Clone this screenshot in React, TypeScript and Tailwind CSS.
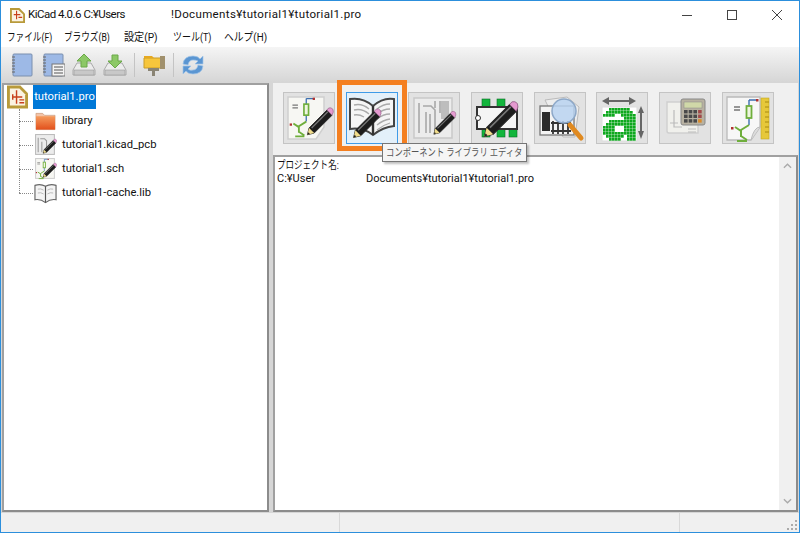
import type { ReactNode } from "react";

const font = { fontFamily: 'Roboto, "Noto Sans CJK JP", sans-serif' };

function Pencil({ x = 0, y = 0, s = 1 }: { x?: number; y?: number; s?: number }) {
  // tip at bottom left, 36 box
  return (
    <g transform={`translate(${x} ${y}) scale(${s})`}>
      <path d="M6 27 L27 6 L33 12 L12 33 L4 35 Z" fill="#1d1d1d" stroke="#222" strokeWidth="1" />
      <path d="M9 27 L28 8" stroke="#777" strokeWidth="1.5" />
      <path d="M27 6 L29 3.5 Q32 2.5 34 5 Q35.5 8 33 12 Z" fill="#e59ad0" stroke="#8a5a80" strokeWidth=".7" />
      <path d="M6 27 L12 33 L4 35 Z" fill="#f0dc8c" />
      <path d="M4 35 L5 32 L7 34 Z" fill="#222" />
    </g>
  );
}

function SchLines() {
  return (
    <g fill="none" strokeWidth="1.4">
      <path d="M22 5 H30 M22 5 V12 M22 23 V30" stroke="#3c6fb0" />
      <rect x="19.5" y="11" width="5" height="12" stroke="#6fae3c" fill="#eef5e0" strokeWidth="1.8" />
      <path d="M22 30 L14 35 V42 M14 36 L8 32 M14 41 L20 45 M10 46 H20" stroke="#6fae3c" strokeWidth="2" />
      <path d="M7 12 H13 M7 15 H13" stroke="#777" />
      <rect x="29" y="4" width="2.5" height="2.5" fill="#b03030" stroke="none" />
      <rect x="4" y="32" width="2.5" height="2.5" fill="#b03030" stroke="none" />
    </g>
  );
}

function SchIcon() {
  return (
    <svg viewBox="0 0 50 50" className="w-[50px] h-[50px]">
      <path d="M4 4 H40 V34 L32 46 H4 Z" fill="#f7f7f3" stroke="#cfcfcf" strokeWidth="1.5" />
      <g transform="translate(2 1) scale(.92)"><SchLines /></g>
      <Pencil x={20} y={12} s={0.85} />
    </svg>
  );
}

function BookIcon() {
  return (
    <svg viewBox="0 0 50 50" className="w-[50px] h-[50px]">
      <path d="M26 13 Q16 4 3 6 V36 Q16 34 26 42 Q36 34 47 33 V6 Q36 4 26 13 Z" fill="#f5f5f5" stroke="#444" strokeWidth="2" />
      <path d="M26 13 V42" stroke="#333" strokeWidth="2.4" />
      <path d="M7 12 Q15 10 22 16 M7 17 Q15 15 22 21 M7 22 Q12 21 17 24 M30 16 Q36 11 43 11 M30 21 Q36 16 43 16 M30 26 Q36 21 43 21 M30 32 Q36 27 43 26 M30 37 Q36 32 43 30" stroke="#aaa" strokeWidth="1.3" fill="none" />
      <Pencil x={3} y={13} s={0.9} />
    </svg>
  );
}

function PcbIcon() {
  return (
    <svg viewBox="0 0 50 50" className="w-[50px] h-[50px]">
      <rect x="5" y="5" width="38" height="40" fill="#ececec" stroke="#c9c9c9" strokeWidth="1.5" />
      <g fill="none" stroke="#a8a8a8" strokeWidth="1.6">
        <path d="M10 10 V40 M14 13 H22 L26 17 V40 M17 19 V40 M21 21 V40 M26 8 V15 M31 8 V20" />
      </g>
      <rect x="32" y="8" width="8" height="18" fill="#bdbdbd" />
      <Pencil x={22} y={16} s={0.72} />
    </svg>
  );
}

function ChipIcon() {
  return (
    <svg viewBox="0 0 50 50" className="w-[50px] h-[50px]">
      <rect x="10" y="6" width="8" height="9" fill="#12b53c" stroke="#0a6d25" strokeWidth=".6" />
      <rect x="25" y="6" width="8" height="9" fill="#12b53c" stroke="#0a6d25" strokeWidth=".6" />
      <rect x="10" y="35" width="8" height="9" fill="#12b53c" stroke="#0a6d25" strokeWidth=".6" />
      <rect x="25" y="35" width="8" height="9" fill="#12b53c" stroke="#0a6d25" strokeWidth=".6" />
      <rect x="37" y="35" width="8" height="9" fill="#12b53c" stroke="#0a6d25" strokeWidth=".6" />
      <rect x="5" y="14" width="40" height="22" fill="#f5f5f5" stroke="#333" strokeWidth="2" />
      <circle cx="6" cy="25" r="2.5" fill="#fff" stroke="#333" />
      <Pencil x={8} y={5} s={1.1} />
    </svg>
  );
}

function InspectIcon() {
  return (
    <svg viewBox="0 0 50 50" className="w-[50px] h-[50px]">
      <path d="M10 7 L32 4 L44 14 L40 44 H28 Z" fill="#ededed" stroke="#bbb" />
      <rect x="5" y="13" width="34" height="29" fill="#f3f3f3" stroke="#777" strokeWidth="1.3" />
      <rect x="7" y="19" width="8" height="19" fill="#2b2b2b" />
      <path d="M18 28 V41 M23 28 V41 M28 28 V41 M33 28 V41 M16 30 H36 M16 38 H36" stroke="#333" strokeWidth="1.8" />
      <path d="M35 32 L46 45" stroke="#e08a20" strokeWidth="5" strokeLinecap="round" />
      <circle cx="29" cy="18" r="12" fill="#b9d2f0" fillOpacity=".85" stroke="#8da8c8" strokeWidth="1.5" />
    </svg>
  );
}

function FontIcon() {
  const cells = [
    "00111111100", "01111111110", "11110011111", "00000001111", "00111111111", "01111111111",
    "11110001111", "11110001111", "11111111111", "01111110111", "00111100111",
  ];
  return (
    <svg viewBox="0 0 50 50" className="w-[50px] h-[50px]">
      <path d="M5 8 L12 4 V7 H32 V4 L39 8 L32 12 V9 H12 V12 Z" fill="#666" />
      <path d="M44 13 L47 20 H45 V38 H47 L44 46 L41 38 H43 V20 H41 Z" fill="#666" />
      <rect x="5" y="14" width="35" height="34" fill="#fff" stroke="#ddd" />
      {cells.map((row, r) =>
        row.split("").map((c, i) =>
          c === "1" ? <rect key={`${r}-${i}`} x={6 + i * 3} y={15 + r * 3} width="2.7" height="2.7" fill="#0ea81e" /> : null
        )
      )}
    </svg>
  );
}

function CalcIcon() {
  return (
    <svg viewBox="0 0 50 50" className="w-[50px] h-[50px]">
      <path d="M7 9 H38 V40 H9 Q7 40 7 38 Z" fill="#f0f0ec" stroke="#cfcfcf" strokeWidth="1.4" />
      <path d="M14 17 V34 H22 M10 30 H18 M28 36 H36 M28 39 H36" stroke="#bbb" strokeWidth="1.2" fill="none" />
      <rect x="21" y="6" width="24" height="26" rx="2" fill="#b8b2a2" stroke="#888" />
      <rect x="24" y="9" width="18" height="6" fill="#d0d8a8" stroke="#888" strokeWidth=".5" />
      {[0, 1, 2].map((r) =>
        [0, 1, 2, 3].map((c) => (
          <rect key={`${r}${c}`} x={24 + c * 4.7} y={17 + r * 4.6} width="3.6" height="3.4" fill={c === 3 ? (r === 2 ? "#d98a2a" : "#a04a4a") : "#4a4a4a"} />
        ))
      )}
    </svg>
  );
}

function ReportIcon() {
  return (
    <svg viewBox="0 0 50 50" className="w-[50px] h-[50px]">
      <path d="M4 4 H37 V34 L28 47 H4 Z" fill="#f7f7f7" stroke="#bbb" strokeWidth="1.3" />
      <path d="M37 34 Q31 34 28 47" fill="#ddd" stroke="#bbb" />
      <rect x="38" y="5" width="8" height="41" fill="#e6c83a" stroke="#c4a820" strokeWidth=".6" />
      <path d="M42 9 H46 M42 14 H46 M42 19 H46 M42 24 H46 M42 29 H46 M42 34 H46 M42 39 H46" stroke="#a88a10" />
      <g transform="translate(4 2)"><SchLines /></g>
    </svg>
  );
}

function BigButton({ active, children }: { active?: boolean; children: ReactNode }) {
  return (
    <div
      className={
        active
          ? "w-[52px] h-[52px] flex items-center justify-center border border-[#3f9be8] bg-[#e3f0fa]"
          : "w-[52px] h-[52px] flex items-center justify-center border border-[#c4c4c4] bg-[#e2e2e2]"
      }
    >
      {children}
    </div>
  );
}

function NotebookIcon({ doc }: { doc?: boolean }) {
  return (
    <svg viewBox="0 0 24 24" className="w-[24px] h-[24px]">
      <rect x="3" y="1" width="19" height="22" rx="1" fill="#9db9e6" stroke="#7a8fae" />
      <path d="M2 4 H5 M2 7 H5 M2 10 H5 M2 13 H5 M2 16 H5 M2 19 H5" stroke="#666" strokeWidth="1" />
      {doc && (
        <>
          <rect x="11" y="11" width="13" height="12" fill="#f4f4f4" stroke="#777" />
          <path d="M13 14 H22 M13 17 H22 M13 20 H22" stroke="#555" strokeWidth="1.2" />
        </>
      )}
    </svg>
  );
}

function DriveIcon({ down }: { down?: boolean }) {
  return (
    <svg viewBox="0 0 24 24" className="w-[24px] h-[24px]">
      <path d="M5 10 H19 L23 17 V22 H1 V17 Z" fill="#ececec" stroke="#aaa" />
      <rect x="2" y="17" width="20" height="5" fill="#c8c8c8" stroke="#999" strokeWidth=".6" />
      <path
        d={down ? "M9 2 H15 V8 H19 L12 15 L5 8 H9 Z" : "M12 1 L19 8 H15 V14 H9 V8 H5 Z"}
        fill="#8cc866"
        stroke="#6aa848"
      />
    </svg>
  );
}

function SwitchIcon() {
  return (
    <svg viewBox="0 0 24 24" className="w-[24px] h-[24px]">
      <path d="M2 5 H19 V15 H2 Z" fill="#f7c63c" stroke="#c99c28" />
      <path d="M2 5 V3 H10 L12 5 Z" fill="#e6a820" />
      <rect x="18" y="3" width="5" height="13" fill="#a0906c" />
      <path d="M6 15 H17 V18 H13 V23 H10 V18 H6 Z" fill="#8a8474" />
    </svg>
  );
}

function RefreshIcon() {
  return (
    <svg viewBox="0 0 24 24" className="w-[24px] h-[24px]" fill="none">
      <path d="M2 11 Q3 3 12 3 Q17 3 19 6 L22 3 V11 H14 L17 8 Q15 7 12 7 Q8 7 7 12 Z" fill="#5b96d2" stroke="#a0c4e8" strokeWidth=".7" />
      <path d="M22 13 Q21 21 12 21 Q7 21 5 18 L2 21 V13 H10 L7 16 Q9 18 12 17 Q16 17 17 12 Z" fill="#5b96d2" stroke="#a0c4e8" strokeWidth=".7" />
    </svg>
  );
}

function ProjectIcon() {
  return (
    <svg viewBox="0 0 22 24" className="w-[21px] h-[24px] shrink-0">
      <path d="M0 0 H14 L22 8 V24 H0 Z" fill="#b89a3a" />
      <path d="M3 3 H13 L19 9 V21 H3 Z" fill="#fbf3e2" />
      <path d="M10 5 V19 M6 12 H16 M6 9 V15 M13 15 H18 M13 18 H18" stroke="#c8401c" strokeWidth="1.5" fill="none" />
    </svg>
  );
}

function TreeRow({ icon, label }: { icon: ReactNode; label: string }) {
  return (
    <div className="h-[24px] flex items-center">
      <div className="w-[14px] ml-[12px] mr-[1px] border-t border-dotted border-[#888]" />
      <div className="w-[23px] h-[24px] flex items-center justify-center">{icon}</div>
      <span className="ml-[5px] text-[11.2px] text-[#111]">{label}</span>
    </div>
  );
}

function Sep() {
  return <div className="w-px h-[24px] bg-[#c4c4c4]" />;
}

export default function App() {
  return (
    <div
      className="w-[800px] h-[533px] overflow-hidden flex flex-col bg-[#f0f0f0] border border-[#2c8fdc] relative text-[#111]"
      style={font}
    >
      {/* title bar */}
      <div className="h-[28px] bg-white flex items-center shrink-0">
        <div className="ml-[9px] mr-[3px]">
          <svg viewBox="0 0 16 16" className="w-[15px] h-[15px]">
            <path d="M0 0 H10 L16 6 V16 H0 Z" fill="#b89a3a" />
            <path d="M2 2 H9 L14 7 V14 H2 Z" fill="#fbf3e2" />
            <path d="M7 3 V12 M4 7 H11 M9 10 H13" stroke="#c8401c" strokeWidth="1.2" />
          </svg>
        </div>
        <span className="text-[11.5px] tracking-[-0.5px] w-[143px] whitespace-nowrap">KiCad 4.0.6 C:¥Users</span>
        <span className="text-[11.5px] tracking-[0.35px] whitespace-nowrap">!Documents¥tutorial1¥tutorial1.pro</span>
        <div className="ml-auto flex items-center">
          <div className="w-[45px] flex justify-center">
            <div className="w-[10px] h-px bg-[#444]" />
          </div>
          <div className="w-[45px] flex justify-center">
            <div className="w-[10px] h-[10px] border border-[#444]" />
          </div>
          <div className="w-[45px] flex justify-center">
            <svg viewBox="0 0 10 10" className="w-[10px] h-[10px]">
              <path d="M0 0 L10 10 M10 0 L0 10" stroke="#444" strokeWidth="1" />
            </svg>
          </div>
        </div>
      </div>
      {/* menu: katakana is condensed in the reference's UI font */}
      <div className="h-[18px] bg-white flex items-center shrink-0 text-[11.5px] pl-[6px] whitespace-nowrap">
        <div className="w-[57px]"><span className="inline-block origin-left scale-x-[0.75]">ファイル(F)</span></div>
        <div className="w-[60px]"><span className="inline-block origin-left scale-x-[0.75]">ブラウズ(B)</span></div>
        <div className="w-[49px]"><span className="inline-block origin-left scale-x-[0.88]">設定(P)</span></div>
        <div className="w-[51px]"><span className="inline-block origin-left scale-x-[0.78]">ツール(T)</span></div>
        <div><span className="inline-block origin-left scale-x-[0.85]">ヘルプ(H)</span></div>
      </div>
      {/* toolbar */}
      <div className="h-[35px] shrink-0 flex items-center pl-[9px] bg-gradient-to-b from-[#f5f5f5] to-[#d6d6d6] gap-[7px]">
        <NotebookIcon />
        <NotebookIcon doc />
        <DriveIcon />
        <DriveIcon down />
        <Sep />
        <SwitchIcon />
        <Sep />
        <RefreshIcon />
      </div>
      {/* body */}
      <div className="flex-1 flex min-h-0 bg-[#d6d6d6] pt-[1px] pl-[1px] pr-[1px] gap-[4px]">
        <div className="w-[267px] bg-white border-2 border-t-[#a0a0a0] border-l-[#a0a0a0] border-r-[#8c8c8c] border-b-[#8c8c8c] pl-[3px] relative">
          <div className="flex items-center h-[24px]">
            <ProjectIcon />
            <span className="ml-[5px] h-[24px] w-[63px] flex items-center justify-center bg-[#0078d7] text-white text-[11.2px]">tutorial1.pro</span>
          </div>
          <div className="absolute left-[15px] top-[24px] h-[84px] border-l border-dotted border-[#888]" />
          <TreeRow
            label="library"
            icon={
              <svg viewBox="0 0 22 20" className="w-[21px] h-[20px]">
                <path d="M1 2 H8 L10 4 H21 V19 H1 Z" fill="#f4c4a8" stroke="#c09070" strokeWidth=".6" />
                <defs>
                  <linearGradient id="folderFill" x1="0" y1="0" x2="0" y2="1">
                    <stop offset="0" stopColor="#f59a5c" />
                    <stop offset="1" stopColor="#e2501c" />
                  </linearGradient>
                </defs>
                <rect x="1" y="5" width="20" height="14" fill="url(#folderFill)" />
              </svg>
            }
          />
          <TreeRow
            label="tutorial1.kicad_pcb"
            icon={
              <svg viewBox="0 0 44 44" className="w-[24px] h-[24px]">
                <rect x="3" y="2" width="36" height="38" fill="#ececec" stroke="#bbb" strokeWidth="2" />
                <path d="M8 8 V36 M12 10 H20 L24 14 V36 M15 16 V36" stroke="#999" strokeWidth="2" fill="none" />
                <Pencil x={14} y={8} s={0.85} />
              </svg>
            }
          />
          <TreeRow
            label="tutorial1.sch"
            icon={
              <svg viewBox="0 0 44 44" className="w-[24px] h-[24px]">
                <rect x="3" y="2" width="36" height="38" fill="#f7f7f3" stroke="#cfcfcf" strokeWidth="2" />
                <g transform="translate(0 -1) scale(.9)"><SchLines /></g>
                <Pencil x={14} y={8} s={0.85} />
              </svg>
            }
          />
          <TreeRow
            label="tutorial1-cache.lib"
            icon={
              <svg viewBox="0 0 24 22" className="w-[24px] h-[22px]">
                <path d="M12 4 Q7 1 1 3 V18 Q7 17 12 21 Q17 17 23 18 V3 Q17 1 12 4 Z" fill="#f4f4f4" stroke="#666" strokeWidth="1.2" />
                <path d="M12 4 V21" stroke="#555" strokeWidth="1.2" />
                <path d="M4 7 Q7 6 10 8 M4 11 Q7 10 10 12 M14 8 Q17 6 20 7 M14 12 Q17 10 20 11" stroke="#aaa" fill="none" strokeWidth=".8" />
              </svg>
            }
          />
        </div>
        <div className="flex-1 flex flex-col min-w-0">
          <div className="h-[72px] shrink-0 flex items-center bg-[#f0f0f0] pl-[10px] pr-[20px] gap-[10.7px] pb-[2px]">
            <BigButton><SchIcon /></BigButton>
            <BigButton active><BookIcon /></BigButton>
            <BigButton><PcbIcon /></BigButton>
            <BigButton><ChipIcon /></BigButton>
            <BigButton><InspectIcon /></BigButton>
            <BigButton><FontIcon /></BigButton>
            <BigButton><CalcIcon /></BigButton>
            <BigButton><ReportIcon /></BigButton>
          </div>
          <div className="flex-1 bg-white border-2 border-t-[#a0a0a0] border-l-[#a0a0a0] border-r-[#8c8c8c] border-b-[#8c8c8c] flex min-h-0">
            <div className="flex-1 text-[11px] leading-[13px] pl-[2px] pt-[2px]">
              <div className="origin-left scale-x-[0.775] whitespace-nowrap">プロジェクト名:</div>
              <div className="whitespace-nowrap">
                <span className="inline-block w-[89px]">C:¥User</span>Documents¥tutorial1¥tutorial1.pro
              </div>
            </div>
            <div className="w-[17px] bg-[#f0f0f0] flex flex-col justify-between items-center py-[6px]">
              <svg viewBox="0 0 10 6" className="w-[9px] h-[6px]"><path d="M1 5 L5 1 L9 5" stroke="#aaa" strokeWidth="1.5" fill="none" /></svg>
              <svg viewBox="0 0 10 6" className="w-[9px] h-[6px]"><path d="M1 1 L5 5 L9 1" stroke="#aaa" strokeWidth="1.5" fill="none" /></svg>
            </div>
          </div>
        </div>
      </div>
      {/* status bar */}
      <div className="h-[20px] shrink-0 flex bg-[#f0f0f0] border-t border-[#d6d6d6]">
        <div className="w-[339px] border-r border-[#d9d9d9]" />
        <div className="w-[340px] border-r border-[#d9d9d9]" />
        <div className="flex-1 flex justify-end items-end p-[2px]">
          <svg viewBox="0 0 10 10" className="w-[10px] h-[10px]" fill="#aaa">
            <rect x="8" y="0" width="2" height="2" /><rect x="4" y="4" width="2" height="2" /><rect x="8" y="4" width="2" height="2" />
            <rect x="0" y="8" width="2" height="2" /><rect x="4" y="8" width="2" height="2" /><rect x="8" y="8" width="2" height="2" />
          </svg>
        </div>
      </div>
      {/* annotation + tooltip */}
      <div className="absolute left-[336px] top-[79px] w-[70px] h-[71px] border-[5px] border-[#f47f20]" />
      <div className="absolute left-[381px] top-[142px] w-[145px] h-[19px] flex items-center justify-center bg-[#f5f5f5] border border-[#767676] text-[#555] whitespace-nowrap shadow-[2px_2px_2px_rgba(0,0,0,0.25)]">
        <span className="shrink-0 text-[10.5px] scale-x-[0.79]">コンポーネント ライブラリ エディタ</span>
      </div>
    </div>
  );
}
